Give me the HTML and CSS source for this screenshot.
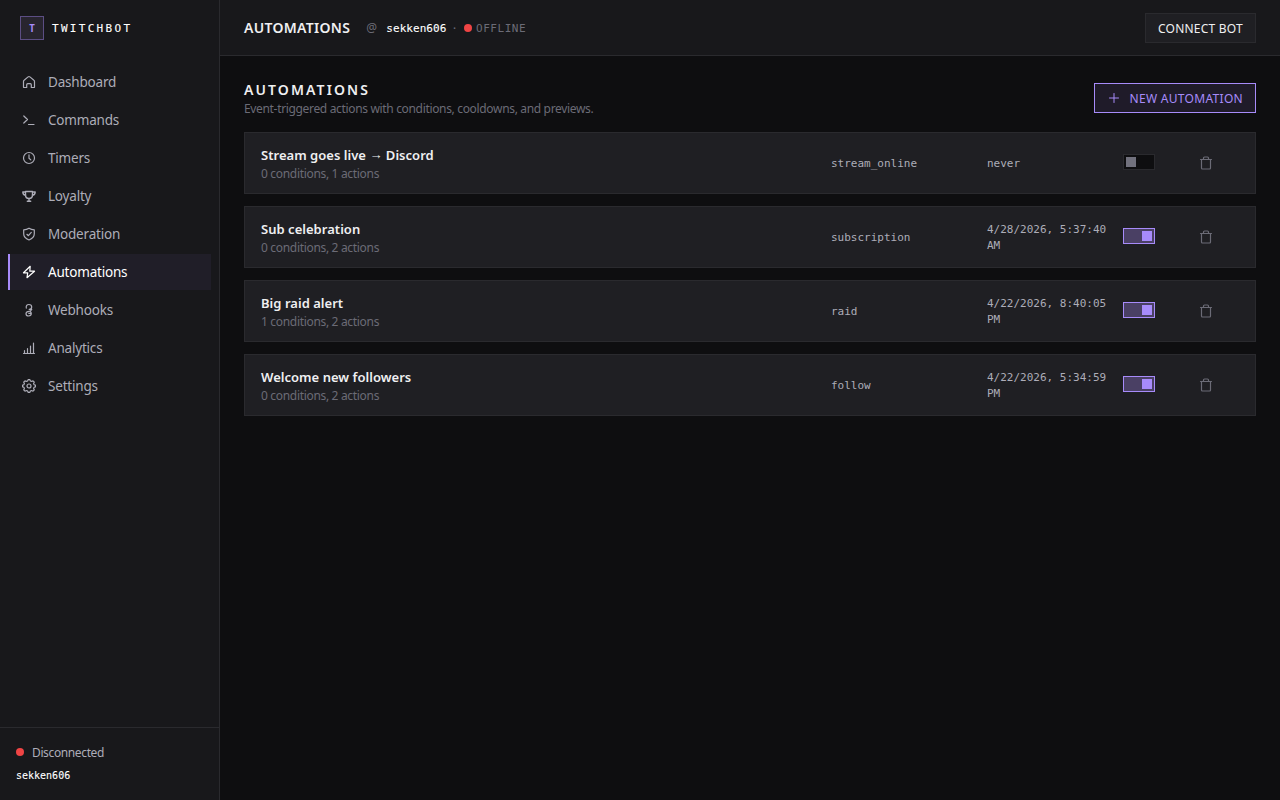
FILE: index.html
```html
<!DOCTYPE html>
<html lang="en">
<head>
    <meta charset="UTF-8">
    <meta name="viewport" content="width=device-width, initial-scale=1.0">
    <title>TwitchBot - Automations</title>
    <link rel="stylesheet" href="styles.css">
</head>
<body>
    <!-- Shared icon, reused by every automation row -->
    <svg class="sprite">
        <symbol id="icon-trash" viewBox="0 0 14 14">
            <path d="M1.5 3.5h11M2.5 3.5v8.6c0 .6.3.9.9.9h7.2c.6 0 .9-.3.9-.9V3.5M4.5 3.2V2c0-.6.4-1 1-1h3c.6 0 1 .4 1 1v1.2"/>
        </symbol>
    </svg>

    <aside class="sidebar">
        <div class="brand">
            <div class="brand-logo">T</div>
            <span class="brand-name">TWITCHBOT</span>
        </div>

        <nav class="nav">
            <a class="nav-item" href="#">
                <svg class="icon" viewBox="0 0 14 14"><path d="M1.5 6.4c0-.5.2-.9.6-1.2l4-3.3c.5-.4 1.3-.4 1.8 0l4 3.3c.4.3.6.7.6 1.2v5.5c0 .4-.2.6-.6.6H9.3V9.700a1 1 0 0 0-1-1H5.700a1 1 0 0 0-1 1v2.800H2.100c-.4 0-.6-.2-.6-.6z"/></svg>
                <span>Dashboard</span>
            </a>
            <a class="nav-item" href="#">
                <svg class="icon" viewBox="0 0 14 14"><path d="M1.8 3l3.700 3.500L1.800 10M6.500 11.500H12"/></svg>
                <span>Commands</span>
            </a>
            <a class="nav-item" href="#">
                <svg class="icon" viewBox="0 0 14 14"><circle cx="7" cy="7" r="5.5"/><path d="M7 3.800v3.400l1.800 1.700"/></svg>
                <span>Timers</span>
            </a>
            <a class="nav-item" href="#">
                <svg class="icon icon-trophy" viewBox="0 0 14 14"><path d="M3.500 2.500h7V6c0 2-1.500 3.500-3.500 3.500S3.500 8 3.500 6zM3.500 3H.8c.1 2 1.200 3.300 3 3.300M10.500 3h2.700c-.1 2-1.200 3.300-3 3.300M7 9.500V12M5.300 12.300h3.400"/></svg>
                <span>Loyalty</span>
            </a>
            <a class="nav-item" href="#">
                <svg class="icon" viewBox="0 0 14 14"><path d="M7 1.200c1.600 1 3.300 1.500 5.300 1.600v4c0 3-2 5-5.300 6.200-3.300-1.200-5.300-3.200-5.300-6.200v-4C3.700 2.700 5.400 2.200 7 1.200zM4.900 7.300l1.500 1.400 2.900-3.300"/></svg>
                <span>Moderation</span>
            </a>
            <a class="nav-item active" href="#">
                <svg class="icon" viewBox="0 0 14 14"><path d="M8.200 1.300 1.500 7.800h4.200L5 12.700l7.500-6.500H7.800z"/></svg>
                <span>Automations</span>
            </a>
            <a class="nav-item" href="#">
                <svg class="icon" viewBox="0 0 14 14"><path d="M4.300 5.200C3.800 2.800 5 1.500 6.900 1.500c1.700 0 2.800 1 2.800 2.500 0 1.400-1 2.400-2.500 2.400M7.200 6.400h2.500M9.700 6.400c-.4 1.400-1.300 1.900-2.600 1.900-2 0-3.100 1-3.100 2.400s1.100 2.300 2.600 2.300 2.700-1 2.700-2.400c0-.9-.3-1.400-.9-1.800M6.800 10.400h2.400"/></svg>
                <span>Webhooks</span>
            </a>
            <a class="nav-item" href="#">
                <svg class="icon" viewBox="0 0 14 14"><path d="M1.500 12.500h11M2.500 12V9.500M5.500 12V7.500M8.500 12V5M11.500 12V2"/></svg>
                <span>Analytics</span>
            </a>
            <a class="nav-item" href="#">
                <svg class="icon" viewBox="0 0 14 14"><path d="M5.700 1.900 6.100.6h1.800l.4 1.300 1.400.6 1.300-.7 1.300 1.300-.7 1.200.5 1.400 1.300.4v1.800l-1.300.4-.5 1.400.7 1.200-1.300 1.300-1.300-.7-1.400.6-.4 1.300H6.100l-.4-1.300-1.400-.6-1.300.7-1.300-1.300.7-1.200-.5-1.400-1.300-.4V6.100l1.300-.4.5-1.400-.7-1.200L3 1.800l1.300.7z"/><circle cx="7" cy="7" r="2"/></svg>
                <span>Settings</span>
            </a>
        </nav>

        <div class="sidebar-footer">
            <div class="connection">
                <span class="dot"></span>
                <span class="connection-label">Disconnected</span>
            </div>
            <div class="account">sekken606</div>
        </div>
    </aside>

    <div class="page">
        <header class="topbar">
            <h1 class="topbar-title">AUTOMATIONS</h1>
            <div class="channel">
                <span class="channel-at">@</span>
                <span class="channel-name">sekken606</span>
                <span class="channel-sep">·</span>
                <span class="dot"></span>
                <span class="channel-status">OFFLINE</span>
            </div>
            <button class="btn btn-connect">CONNECT BOT</button>
        </header>

        <main class="content">
            <div class="content-header">
                <div>
                    <h2 class="content-title">AUTOMATIONS</h2>
                    <p class="content-subtitle">Event-triggered actions with conditions, cooldowns, and previews.</p>
                </div>
                <button class="btn btn-primary">
                    <svg class="icon" viewBox="0 0 14 14"><path d="M7 2.500v9M2.500 7h9"/></svg>
                    <span>NEW AUTOMATION</span>
                </button>
            </div>

            <div class="list">
                <div class="row">
                    <div class="row-main">
                        <div class="row-name">Stream goes live <span class="arrow">→</span> Discord</div>
                        <div class="row-meta">0 conditions, 1 actions</div>
                    </div>
                    <div class="mono">stream_online</div>
                    <div class="mono">never</div>
                    <button class="toggle" aria-label="Toggle"></button>
                    <button class="delete" aria-label="Delete"><svg class="icon"><use href="#icon-trash"/></svg></button>
                </div>
                <div class="row">
                    <div class="row-main">
                        <div class="row-name">Sub celebration</div>
                        <div class="row-meta">0 conditions, 2 actions</div>
                    </div>
                    <div class="mono">subscription</div>
                    <div class="mono">4/28/2026, 5:37:40 AM</div>
                    <button class="toggle on" aria-label="Toggle"></button>
                    <button class="delete" aria-label="Delete"><svg class="icon"><use href="#icon-trash"/></svg></button>
                </div>
                <div class="row">
                    <div class="row-main">
                        <div class="row-name">Big raid alert</div>
                        <div class="row-meta">1 conditions, 2 actions</div>
                    </div>
                    <div class="mono">raid</div>
                    <div class="mono">4/22/2026, 8:40:05 PM</div>
                    <button class="toggle on" aria-label="Toggle"></button>
                    <button class="delete" aria-label="Delete"><svg class="icon"><use href="#icon-trash"/></svg></button>
                </div>
                <div class="row">
                    <div class="row-main">
                        <div class="row-name">Welcome new followers</div>
                        <div class="row-meta">0 conditions, 2 actions</div>
                    </div>
                    <div class="mono">follow</div>
                    <div class="mono">4/22/2026, 5:34:59 PM</div>
                    <button class="toggle on" aria-label="Toggle"></button>
                    <button class="delete" aria-label="Delete"><svg class="icon"><use href="#icon-trash"/></svg></button>
                </div>
            </div>
        </main>
    </div>
</body>
</html>
```
FILE: styles.css
```css
:root {
    --bg: #0e0e10;
    --panel: #18181b;
    --card: #1f1f23;
    --border: #2a2a2e;
    --text: #efeff1;
    --text-soft: #adadb8;
    --text-muted: #6b6b76;
    --accent: #a78bfa;
    --danger: #ef4444;
    --sans: "Noto Sans", "Open Sans", sans-serif;
    --mono: "DejaVu Sans Mono", "Liberation Mono", monospace;
}

* {
    box-sizing: border-box;
    margin: 0;
    padding: 0;
}

body {
    display: flex;
    height: 100vh;
    overflow: hidden;
    background-color: var(--bg);
    color: var(--text);
    font-family: var(--sans);
    font-size: 14px;
}

button {
    font: inherit;
    color: inherit;
    cursor: pointer;
}

.sprite {
    display: none;
}

.icon {
    width: 14px;
    height: 14px;
    flex-shrink: 0;
    fill: none;
    stroke: currentColor;
    stroke-width: 1.2;
    stroke-linecap: round;
    stroke-linejoin: round;
}

.icon-trophy {
    stroke-width: 1.4;
}

.dot {
    width: 8px;
    height: 8px;
    flex-shrink: 0;
    border-radius: 50%;
    background-color: var(--danger);
}

/* Sidebar */
.sidebar {
    width: 220px;
    flex-shrink: 0;
    display: flex;
    flex-direction: column;
    background-color: var(--panel);
    border-right: 1px solid var(--border);
}

.brand {
    display: flex;
    align-items: center;
    gap: 8px;
    height: 56px;
    padding: 0 20px;
}

.brand-logo {
    display: flex;
    align-items: center;
    justify-content: center;
    width: 24px;
    height: 24px;
    background-color: #28252f;
    border: 1px solid #5c4e84;
    color: var(--accent);
    font-family: var(--mono);
    font-size: 10px;
    font-weight: bold;
}

.brand-name {
    color: #fff;
    font-family: var(--mono);
    font-size: 11px;
    letter-spacing: 2.3px;
    -webkit-text-stroke: 0.1px;
}

.nav {
    flex: 1;
    display: flex;
    flex-direction: column;
    gap: 2px;
    padding: 8px;
}

.nav-item {
    display: flex;
    align-items: center;
    gap: 12px;
    height: 36px;
    padding: 0 12px;
    border-left: 2px solid transparent;
    color: var(--text-soft);
    font-size: 13.5px;
    letter-spacing: -0.2px;
    text-decoration: none;
}

.nav-item span {
    padding-bottom: 1px;
}

.nav-item.active {
    background-color: #201e28;
    border-left-color: var(--accent);
    color: #fff;
}

.sidebar-footer {
    height: 73px;
    padding: 16px;
    border-top: 1px solid var(--border);
}

.connection {
    display: flex;
    align-items: center;
    gap: 8px;
    height: 16px;
}

.connection-label {
    color: var(--text-soft);
    font-size: 12px;
    letter-spacing: -0.37px;
}

.account {
    margin-top: 8px;
    color: #fff;
    font-family: var(--mono);
    font-size: 10px;
    line-height: 15px;
    -webkit-text-stroke: 0.1px;
}

/* Top bar */
.page {
    flex: 1;
    min-width: 0;
    display: flex;
    flex-direction: column;
}

.topbar {
    display: flex;
    align-items: center;
    gap: 16px;
    height: 56px;
    padding: 0 24px;
    background-color: var(--panel);
    border-bottom: 1px solid var(--border);
}

.topbar-title {
    font-size: 14px;
    font-weight: 600;
    letter-spacing: 0.3px;
}

.channel {
    display: flex;
    align-items: center;
    flex: 1;
    color: var(--text-muted);
    font-family: var(--mono);
    font-size: 11px;
}

.channel-at {
    width: 12px;
    margin-right: 8px;
    font-family: var(--sans);
    font-size: 12px;
}

.channel-name {
    padding-top: 1px;
    color: #fff;
    letter-spacing: 0.05px;
    -webkit-text-stroke: 0.1px;
}

.channel-sep {
    margin: 2px 6px 0 5px;
}

.channel-status {
    padding-top: 1px;
    margin-left: 4px;
    letter-spacing: 0.55px;
}

.btn {
    display: flex;
    align-items: center;
    gap: 9px;
    height: 30px;
    padding: 0 12px;
    border: 1px solid var(--border);
    background-color: var(--card);
    font-size: 12px;
    letter-spacing: 0.3px;
    white-space: nowrap;
}

.btn-connect {
    padding-top: 1px;
    letter-spacing: 0.23px;
}

.btn-primary {
    background-color: #1f1b29;
    border-color: var(--accent);
    color: var(--accent);
}

.btn-primary .icon {
    stroke-width: 1;
}

/* Content */
.content {
    padding: 24px;
}

.content-header {
    display: flex;
    align-items: center;
    justify-content: space-between;
    height: 36px;
    margin-bottom: 16px;
}

.content-title {
    padding-top: 2px;
    font-size: 14px;
    font-weight: 600;
    line-height: 20px;
    letter-spacing: 2.1px;
}

.content-subtitle {
    color: var(--text-muted);
    font-size: 12px;
    line-height: 18px;
    letter-spacing: -0.335px;
}

.list {
    display: flex;
    flex-direction: column;
    gap: 12px;
}

.row {
    display: grid;
    grid-template-columns: 1fr 140px 120px 60px 40px;
    align-items: center;
    gap: 16px;
    height: 62px;
    padding: 0 16px;
    background-color: var(--card);
    border: 1px solid var(--border);
}

.row-main {
    padding-top: 2px;
}

.row-name {
    font-size: 13px;
    font-weight: 600;
    line-height: 20px;
    letter-spacing: 0.03px;
}

.arrow {
    line-height: 1;
    vertical-align: 1px;
}

.row-meta {
    color: var(--text-muted);
    font-size: 12px;
    line-height: 18px;
    letter-spacing: -0.32px;
}

.mono {
    padding-top: 2px;
    color: var(--text-soft);
    font-family: var(--mono);
    font-size: 11px;
    line-height: 16px;
}

.toggle {
    display: flex;
    align-items: center;
    width: 32px;
    height: 16px;
    padding: 0 2px;
    margin-bottom: 2px;
    background-color: var(--bg);
    border: 1px solid var(--border);
}

.toggle::before {
    content: "";
    width: 10px;
    height: 10px;
    background-color: #71717d;
}

.toggle.on {
    justify-content: flex-end;
    background-color: #4a4064;
    border-color: var(--accent);
}

.toggle.on::before {
    background-color: var(--accent);
}

.delete {
    display: flex;
    width: 14px;
    background: none;
    border: none;
    color: #6b6b76;
}
```
